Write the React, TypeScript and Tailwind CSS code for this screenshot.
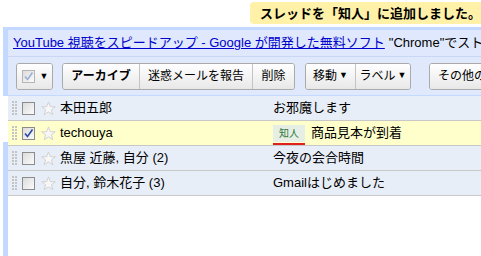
import type { ReactNode } from "react";

const font = { fontFamily: '"Liberation Sans", "Noto Sans CJK JP", sans-serif' };

const threads = [
  { from: "本田五郎", subject: "お邪魔します", checked: false, label: false },
  { from: "techouya", subject: "商品見本が到着", checked: true, label: true },
  { from: "魚屋 近藤, 自分 (2)", subject: "今夜の会合時間", checked: false, label: false },
  { from: "自分, 鈴木花子 (3)", subject: "Gmailはじめました", checked: false, label: false },
];

const Dots = () => (
  <div className="grid grid-cols-2 gap-[1px] w-[5px]">
    {Array.from({ length: 10 }).map((_, i) => (
      <span key={i} className="block w-[2px] h-[2px] bg-[#c4c4c4]" />
    ))}
  </div>
);

const Check = ({ checked, dim }: { checked?: boolean; dim?: boolean }) => (
  <span
    className={`relative block w-[13px] h-[13px] border ${
      dim ? "border-[#b5b5b5]" : "border-[#8c8c8c]"
    } bg-gradient-to-br from-[#dcdcdc] to-[#fbfbfb]`}
  >
    {checked && (
      <svg viewBox="0 0 11 11" className="absolute inset-0 w-[11px] h-[11px]">
        <path
          d="M2 5.5 L4.5 8.5 L9.5 1.5"
          fill="none"
          stroke={dim ? "#9bb0d6" : "#2a4a9e"}
          strokeWidth="1.6"
        />
      </svg>
    )}
  </span>
);

const Star = () => (
  <svg viewBox="0 0 16 16" className="w-[15px] h-[15px]">
    <path
      d="M8 1 L10 6 L15.2 6.2 L11.1 9.4 L12.6 14.6 L8 11.6 L3.4 14.6 L4.9 9.4 L0.8 6.2 L6 6 Z"
      fill="#f7f7f7"
      stroke="#cfcfcf"
      strokeWidth="1"
      strokeLinejoin="round"
    />
  </svg>
);

const Btn = ({ children, className = "" }: { children: ReactNode; className?: string }) => (
  <div
    className={`flex items-center justify-center h-[25px] bg-gradient-to-b from-white to-[#e8e8e8] text-[12px] text-black ${className}`}
  >
    {children}
  </div>
);

const Group = ({ children, className = "" }: { children: ReactNode; className?: string }) => (
  <div className={`flex border border-[#aaaaaa] rounded-[3px] overflow-hidden divide-x divide-[#c4c4c4] ${className}`}>
    {children}
  </div>
);

export default function App() {
  return (
    <div className="w-[481px] h-[256px] bg-white overflow-hidden flex flex-col" style={font}>
      <div className="h-[27px] flex justify-end items-start pt-[2px]">
        <div className="w-[231px] h-[22px] bg-[#fff1a8] rounded-l-[4px] pl-[10px] flex items-center text-[13px] font-bold leading-none whitespace-nowrap">
          スレッドを「知人」に追加しました。
        </div>
      </div>

      <div className="ml-[3px] bg-[#c3d9ff] pl-[5px] pt-[3px]">
        <div className="h-[26px] bg-[#dfe8fc] flex items-center pl-[5px] text-[13px] whitespace-nowrap overflow-hidden">
          <span className="text-[#0000cc] underline">YouTube 視聴をスピードアップ - Google が開発した無料ソフト</span>
          <span className="ml-[4px] text-black">"Chrome"でストレスのないブラウジング</span>
        </div>
        <div className="h-[1px] bg-[#c9d7f5]" />
        <div className="h-[38px] bg-[#e0e8fb] flex items-center pl-[8px] whitespace-nowrap overflow-hidden">
          <Group className="w-[37px] shrink-0">
            <Btn className="w-full gap-[5px] pl-[1px]">
              <Check checked dim />
              <span className="text-[9px] leading-none">▼</span>
            </Btn>
          </Group>
          <Group className="ml-[9px] shrink-0">
            <Btn className="w-[77px] font-bold">アーカイブ</Btn>
            <Btn className="w-[113px]">迷惑メールを報告</Btn>
            <Btn className="w-[41px]">削除</Btn>
          </Group>
          <Group className="ml-[10px] shrink-0">
            <Btn className="w-[50px] gap-[2px]">
              移動<span className="text-[9px]">▼</span>
            </Btn>
            <Btn className="w-[54px] gap-[2px]">
              ラベル<span className="text-[9px]">▼</span>
            </Btn>
          </Group>
          <Group className="ml-[18px] shrink-0">
            <Btn className="w-[90px] justify-start pl-[8px]">その他の操作 ▼</Btn>
          </Group>
        </div>
      </div>

      <div className="flex flex-1">
        <div className="w-[8px] flex flex-col">
          <div className="h-[1px] ml-[3px] bg-[#c3d9ff]" />
          <div className="h-[46px]" />
          <div className="flex-1 ml-[3px] bg-[#c3d9ff]" />
        </div>
        <div className="flex-1 self-start">
          <div className="border-t border-[#c3d9ff]">
            {threads.map((t, i) => (
              <div
                key={i}
                className={`flex items-center h-[25px] border-b border-[#c8c8c8] text-[13px] whitespace-nowrap ${
                  t.checked ? "bg-[#ffffcc]" : "bg-[#e8eef7]"
                }`}
              >
                <div className="ml-[4px]">
                  <Dots />
                </div>
                <div className="ml-[5px]">
                  <Check checked={t.checked} />
                </div>
                <div className="ml-[6px]">
                  <Star />
                </div>
                <div className="ml-[4px] w-[213px]">{t.from}</div>
                {t.label && (
                  <div className="relative mr-[6px]">
                    <span className="flex items-center justify-center w-[32px] h-[17px] bg-[#e6eee6] text-[#2f7a3a] text-[10px]">
                      知人
                    </span>
                    <span className="absolute left-0 top-[18px] w-[32px] h-[2px] bg-[#e02020]" />
                  </div>
                )}
                <div>{t.subject}</div>
              </div>
            ))}
          </div>
        </div>
      </div>
    </div>
  );
}
